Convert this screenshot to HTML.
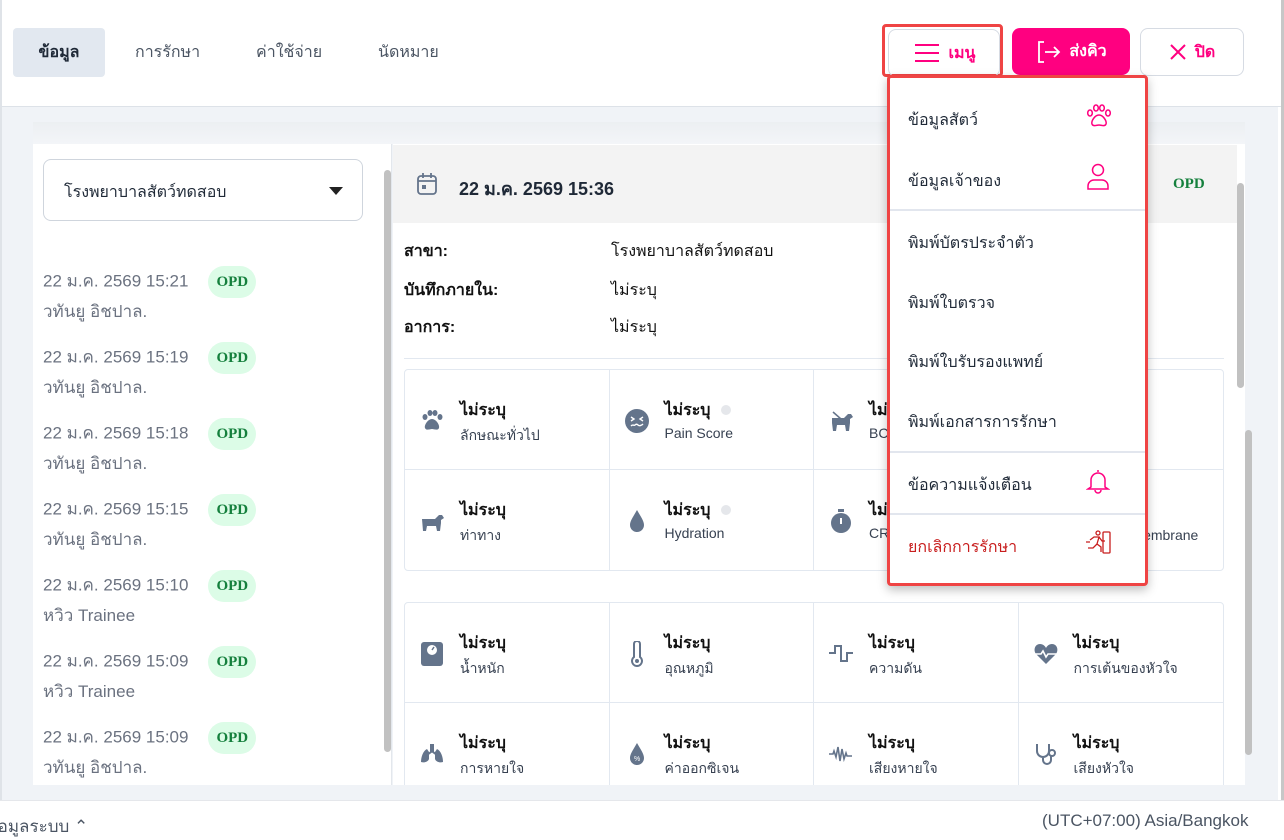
<!DOCTYPE html>
<html><head><meta charset="utf-8"><style>
*{box-sizing:border-box;margin:0;padding:0}
body{width:1284px;height:823px;overflow:hidden;background:#fff;font-family:"Liberation Sans","Noto Sans CJK SC",sans-serif;color:#1f2937;position:relative}
.abs{position:absolute}
.hdr{left:0;top:0;width:1284px;height:107px;background:#fff;border-bottom:1px solid #dde2e8;border-left:2px solid #dfe3e8}
.tab{top:28px;height:49px;line-height:49px;font-size:16px;color:#4b5563}
.btn{top:28px;height:48px;border-radius:8px;font-size:16px;font-weight:bold;display:flex;align-items:center;justify-content:center;gap:8px}
.main{left:0;top:107px;width:1278px;height:693px;background:#f0f3f7;border-left:2px solid #dfe3e8}
.scrollR{left:1281px;top:0;width:3px;height:800px;background:#c7c7c7}
.left{left:33px;top:144px;width:359px;height:641px;background:#fff;border-right:1px solid #e3e7ec}
.sel{left:43px;top:159px;width:320px;height:62px;border:1px solid #cfd5dd;border-radius:8px;font-size:16px;padding:20px 20px;color:#1f2937}
.it{left:43px;font-size:17px;color:#6b7280;line-height:28px}
.badge{display:inline-block;background:#dcfce7;color:#15803d;font-family:"Liberation Serif",serif;font-weight:bold;font-size:15px;padding:0 8px;border-radius:16px;height:32px;line-height:32px;margin-left:20px;vertical-align:middle}
.right{left:393px;top:144px;width:852px;height:641px;background:#fff}
.rh{left:393px;top:145px;width:844px;height:78px;background:#f3f3f3}
.lab{left:404px;font-size:16px;font-weight:bold;color:#111}
.val{left:611px;font-size:16px;color:#111}
.grid{border:1px solid #e2e8f0;border-radius:4px;display:grid;grid-template-columns:repeat(4,1fr);background:#fff}
.cell{height:100px;border-right:1px solid #e2e8f0;border-bottom:1px solid #e2e8f0;position:relative}
.cell .ic{position:absolute;left:14px;top:38px;width:26px;height:26px}
.cell b{position:absolute;left:55px;top:28px;font-size:16px;color:#111}
.cell span{position:absolute;left:55px;top:55px;font-size:14px;color:#374151;white-space:nowrap}
.menu{left:887px;top:75px;width:261px;height:511px;border:3px solid #ef4444;border-radius:4px;background:#fff;box-shadow:0 4px 10px rgba(0,0,0,.25)}
.mi{position:absolute;left:18px;font-size:16px;color:#1f2937}
.dv{position:absolute;left:0;width:255px;height:2px;background:#e2e6ee}
</style></head><body>
<div class="abs hdr"></div>
<div class="abs tab" style="left:13px;width:92px;background:#e2e8f0;border-radius:4px;text-align:center;color:#1f2937;font-weight:bold">ข้อมูล</div>
<div class="abs tab" style="left:135px">การรักษา</div>
<div class="abs tab" style="left:256px">ค่าใช้จ่าย</div>
<div class="abs tab" style="left:378px">นัดหมาย</div>
<div class="abs" style="left:882px;top:24px;width:121px;height:53px;border:3px solid #ef4444;border-radius:4px"></div>
<div class="abs btn" style="left:888px;top:29px;width:112px;border:1px solid #d6dbe3;color:#ff0080">
<svg width="28" height="22" viewBox="0 0 28 22"><path d="M2 3h24M2 11h24M2 19h24" stroke="#ff0080" stroke-width="2"/></svg>เมนู</div>
<div class="abs btn" style="left:1012px;width:118px;height:47px;background:#ff0080;color:#fff">
<svg width="26" height="24" viewBox="0 0 26 24"><path d="M9 2H4v20h5M10 12h14M19 7l5 5-5 5" fill="none" stroke="#fff" stroke-width="1.8"/></svg>ส่งคิว</div>
<div class="abs btn" style="left:1140px;width:104px;border:1px solid #d6dbe3;color:#ff0080">
<svg width="18" height="18" viewBox="0 0 18 18"><path d="M2 2l14 14M16 2L2 16" stroke="#ff0080" stroke-width="2"/></svg>ปิด</div>

<div class="abs main"></div>
<div class="abs" style="left:33px;top:122px;width:1212px;height:22px;background:linear-gradient(#eceff2,#f3f5f8)"></div>
<div class="abs left"></div>
<div class="abs" style="left:384px;top:170px;width:7px;height:582px;background:#c1c1c1;border-radius:4px"></div>
<div class="abs sel">โรงพยาบาลสัตว์ทดสอบ<svg class="abs" style="left:285px;top:27px" width="14" height="8"><path d="M0 0h14L7 8z" fill="#222"/></svg></div>

<div class="abs it" style="top:266px">22 ม.ค. 2569 15:21<span class="badge">OPD</span><br>วทันยู อิชปาล.</div>
<div class="abs it" style="top:342px">22 ม.ค. 2569 15:19<span class="badge">OPD</span><br>วทันยู อิชปาล.</div>
<div class="abs it" style="top:418px">22 ม.ค. 2569 15:18<span class="badge">OPD</span><br>วทันยู อิชปาล.</div>
<div class="abs it" style="top:494px">22 ม.ค. 2569 15:15<span class="badge">OPD</span><br>วทันยู อิชปาล.</div>
<div class="abs it" style="top:570px">22 ม.ค. 2569 15:10<span class="badge">OPD</span><br>หวิว Trainee</div>
<div class="abs it" style="top:646px">22 ม.ค. 2569 15:09<span class="badge">OPD</span><br>หวิว Trainee</div>
<div class="abs it" style="top:722px">22 ม.ค. 2569 15:09<span class="badge">OPD</span><br>วทันยู อิชปาล.</div>

<div class="abs right"></div>
<div class="abs rh"></div>
<svg class="abs" style="left:416px;top:172px" width="22" height="24" viewBox="0 0 22 24"><rect x="2" y="4" width="18" height="18" rx="3" fill="none" stroke="#64748b" stroke-width="1.8"/><path d="M2 9h18M7 1v5M15 1v5" stroke="#64748b" stroke-width="1.8"/><rect x="6" y="13" width="4" height="4" fill="#64748b"/></svg>
<div class="abs" style="left:459px;top:174px;font-size:18px;font-weight:bold;color:#1f2937">22 ม.ค. 2569 15:36</div>
<div class="abs" style="left:1173px;top:176px;font-family:'Liberation Serif',serif;font-weight:bold;font-size:15px;color:#15803d">OPD</div>
<div class="abs" style="left:1237px;top:183px;width:7px;height:205px;background:#c1c1c1;border-radius:4px"></div>
<div class="abs" style="left:1245px;top:430px;width:7px;height:325px;background:#c1c1c1;border-radius:4px"></div>

<div class="abs lab" style="top:239px">สาขา:</div><div class="abs val" style="top:239px">โรงพยาบาลสัตว์ทดสอบ</div>
<div class="abs lab" style="top:278px">บันทึกภายใน:</div><div class="abs val" style="top:278px">ไม่ระบุ</div>
<div class="abs lab" style="top:315px">อาการ:</div><div class="abs val" style="top:315px">ไม่ระบุ</div>
<div class="abs" style="left:404px;top:358px;width:820px;height:1px;background:#e2e8f0"></div>

<div class="abs grid" style="left:404px;top:369px;width:820px;height:202px">
<div class="cell"><svg class="ic" viewBox="0 0 26 26"><ellipse cx="6" cy="9" rx="2.5" ry="3" fill="#64748b"/><ellipse cx="11" cy="5" rx="2.5" ry="3" fill="#64748b"/><ellipse cx="16" cy="5" rx="2.5" ry="3" fill="#64748b"/><ellipse cx="21" cy="9" rx="2.5" ry="3" fill="#64748b"/><path d="M13 11c-4 0-8 6-7 9s5 1 7 1 6 2 7-1-3-9-7-9z" fill="#64748b"/></svg><b>ไม่ระบุ</b><span>ลักษณะทั่วไป</span></div>
<div class="cell"><svg class="ic" viewBox="0 0 26 26"><circle cx="13" cy="13" r="12" fill="#64748b"/><path d="M7 9l3 2-3 2M19 9l-3 2 3 2M7 18c2-2 3 0 4-1s2-1 3 0 3 1 5-1" stroke="#fff" stroke-width="1.4" fill="none"/></svg><b>ไม่ระบุ <i style="display:inline-block;width:10px;height:10px;border-radius:5px;background:#e5e7eb;margin-left:6px"></i></b><span>Pain Score</span></div>
<div class="cell"><svg class="ic" viewBox="0 0 26 26"><path d="M4 10h12l4-4h3l2 3-3 2v4l-1 8h-3l-1-6H9l-1 6H5l-1-8z" fill="#64748b"/><path d="M5 4l8 7" stroke="#64748b" stroke-width="1.5"/></svg><b>ไม่ระบุ</b><span>BCS</span></div>
<div class="cell" style="border-right:0"></div>
<div class="cell" style="border-bottom:0"><svg class="ic" viewBox="0 0 26 26"><path d="M3 11h13l4-4h3l2 3-3 2v3l-1 8h-3l-1-5H8l-1 5H4z" fill="#64748b"/></svg><b>ไม่ระบุ</b><span>ท่าทาง</span></div>
<div class="cell" style="border-bottom:0"><svg class="ic" viewBox="0 0 26 26"><path d="M13 2C9 9 6 13 6 17a7 7 0 0014 0c0-4-3-8-7-15z" fill="#64748b"/></svg><b>ไม่ระบุ <i style="display:inline-block;width:10px;height:10px;border-radius:5px;background:#e5e7eb;margin-left:6px"></i></b><span>Hydration</span></div>
<div class="cell" style="border-bottom:0"><svg class="ic" viewBox="0 0 26 26"><circle cx="13" cy="15" r="10" fill="#64748b"/><rect x="10" y="1" width="6" height="3" fill="#64748b"/><path d="M13 10v6" stroke="#fff" stroke-width="2"/></svg><b>ไม่ระบุ</b><span>CRT</span></div>
<div class="cell" style="border:0"><b>ไม่ระบุ</b><span style="left:60px;top:57px">Mucous Membrane</span></div>
</div>

<div class="abs" style="left:404px;top:602px;width:820px;height:183px;overflow:hidden">
<div class="grid" style="width:820px;height:202px">
<div class="cell"><svg class="ic" viewBox="0 0 26 26"><rect x="2" y="1" width="22" height="24" rx="3" fill="#64748b"/><circle cx="13" cy="9" r="5" fill="#fff"/><path d="M13 9l2-3" stroke="#64748b" stroke-width="1.5"/></svg><b>ไม่ระบุ</b><span>น้ำหนัก</span></div>
<div class="cell"><svg class="ic" viewBox="0 0 26 26"><path d="M10 3a3 3 0 016 0v13a5 5 0 11-6 0z" fill="none" stroke="#64748b" stroke-width="2"/><circle cx="13" cy="20" r="2" fill="#64748b"/></svg><b>ไม่ระบุ</b><span>อุณหภูมิ</span></div>
<div class="cell"><svg class="ic" viewBox="0 0 26 26"><path d="M1 12h6V5h6v15h6v-8h6" fill="none" stroke="#64748b" stroke-width="2"/></svg><b>ไม่ระบุ</b><span>ความดัน</span></div>
<div class="cell" style="border-right:0"><svg class="ic" viewBox="0 0 26 26"><path d="M13 23L3 13C0 9 2 3 7 3c3 0 5 2 6 4 1-2 3-4 6-4 5 0 7 6 4 10z" fill="#64748b"/><path d="M1 13h7l2-3 3 6 2-3h10" stroke="#fff" stroke-width="1.6" fill="none"/></svg><b>ไม่ระบุ</b><span>การเต้นของหัวใจ</span></div>
<div class="cell" style="border-bottom:0"><svg class="ic" viewBox="0 0 26 26"><path d="M12 3v8l-4 3M14 3v8l4 3" stroke="#64748b" stroke-width="2" fill="none"/><path d="M8 8C4 10 2 16 2 21c3 1 7 0 8-3V11zM18 8c4 2 6 8 6 13-3 1-7 0-8-3V11z" fill="#64748b"/></svg><b>ไม่ระบุ</b><span>การหายใจ</span></div>
<div class="cell" style="border-bottom:0"><svg class="ic" viewBox="0 0 26 26"><path d="M13 2C9 9 6 13 6 17a7 7 0 0014 0c0-4-3-8-7-15z" fill="#64748b"/><text x="10" y="20" font-size="7" fill="#fff">%</text></svg><b>ไม่ระบุ</b><span>ค่าออกซิเจน</span></div>
<div class="cell" style="border-bottom:0"><svg class="ic" viewBox="0 0 26 26"><path d="M1 13h4l1-3 2 6 2-10 2 14 2-12 2 10 2-6 1 3h5" stroke="#64748b" stroke-width="1.6" fill="none"/></svg><b>ไม่ระบุ</b><span>เสียงหายใจ</span></div>
<div class="cell" style="border:0"><svg class="ic" viewBox="0 0 26 26"><path d="M4 3v7a6 6 0 0012 0V3M10 16v3a4 4 0 008 0v-4" stroke="#64748b" stroke-width="2" fill="none"/><circle cx="19" cy="12" r="3" fill="none" stroke="#64748b" stroke-width="2"/></svg><b>ไม่ระบุ</b><span>เสียงหัวใจ</span></div>
</div></div>

<div class="abs scrollR"></div>
<div class="abs" style="left:0;top:800px;width:1284px;height:23px;background:#fff;border-top:1px solid #e5e7eb"></div>
<div class="abs" style="left:-14px;top:813px;font-size:17px;color:#4b5563">ข้อมูลระบบ ⌃</div>
<div class="abs" style="left:1042px;top:811px;font-size:17px;color:#4b5563">(UTC+07:00) Asia/Bangkok</div>

<div class="abs menu">
<div class="mi" style="top:30px">ข้อมูลสัตว์</div>
<svg class="abs" style="left:195px;top:26px" width="28" height="26" viewBox="0 0 28 26"><ellipse cx="5" cy="9" rx="2.3" ry="3" fill="none" stroke="#ff0080" stroke-width="1.5"/><ellipse cx="11" cy="4" rx="2.3" ry="3" fill="none" stroke="#ff0080" stroke-width="1.5"/><ellipse cx="17" cy="4" rx="2.3" ry="3" fill="none" stroke="#ff0080" stroke-width="1.5"/><ellipse cx="23" cy="9" rx="2.3" ry="3" fill="none" stroke="#ff0080" stroke-width="1.5"/><path d="M14 11c-4 0-8 6-7 9s5 1 7 1 6 2 7-1-3-9-7-9z" fill="none" stroke="#ff0080" stroke-width="1.5"/></svg>
<div class="mi" style="top:91px">ข้อมูลเจ้าของ</div>
<svg class="abs" style="left:196px;top:85px" width="24" height="28" viewBox="0 0 24 28"><circle cx="12" cy="7" r="5.5" fill="none" stroke="#ff0080" stroke-width="1.5"/><path d="M2 26v-3a6 6 0 016-6h8a6 6 0 016 6v3z" fill="none" stroke="#ff0080" stroke-width="1.5"/></svg>
<div class="dv" style="top:131px"></div>
<div class="mi" style="top:153px">พิมพ์บัตรประจำตัว</div>
<div class="mi" style="top:213px">พิมพ์ใบตรวจ</div>
<div class="mi" style="top:272px">พิมพ์ใบรับรองแพทย์</div>
<div class="mi" style="top:332px">พิมพ์เอกสารการรักษา</div>
<div class="dv" style="top:373px"></div>
<div class="mi" style="top:395px">ข้อความแจ้งเตือน</div>
<svg class="abs" style="left:196px;top:390px" width="24" height="26" viewBox="0 0 24 26"><path d="M12 2v2M5 19V12a7 7 0 0114 0v7l3 2H2zM9 22a3 3 0 006 0" fill="none" stroke="#ff0080" stroke-width="1.5"/></svg>
<div class="dv" style="top:435px"></div>
<div class="mi" style="top:457px;color:#c81e1e">ยกเลิกการรักษา</div>
<svg class="abs" style="left:195px;top:452px" width="28" height="26" viewBox="0 0 28 26"><rect x="18" y="2" width="7" height="21" rx="1" fill="none" stroke="#c81e1e" stroke-width="1.3"/><circle cx="13" cy="3" r="2" fill="none" stroke="#c81e1e" stroke-width="1.3"/><path d="M5 10l4-3h5l-2 7 4 3v5M12 14l-4 4H3M14 7l3 4h3M1 12h4" fill="none" stroke="#c81e1e" stroke-width="1.3"/></svg>
</div>
</body></html>
